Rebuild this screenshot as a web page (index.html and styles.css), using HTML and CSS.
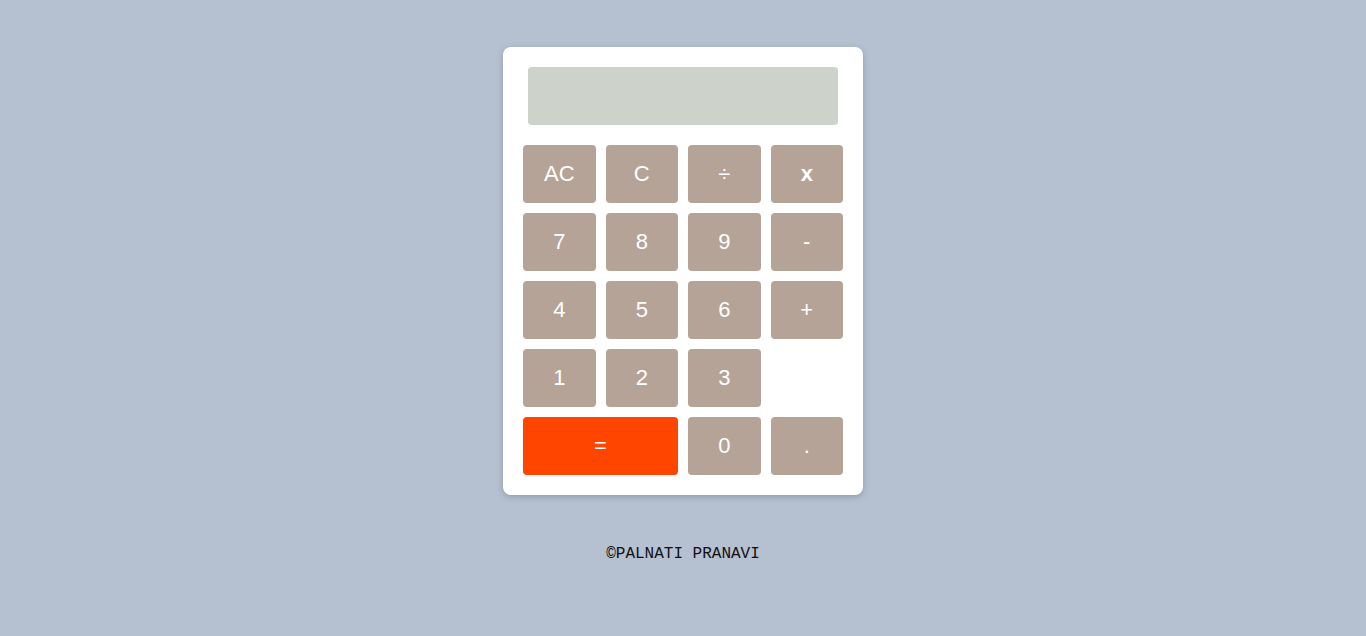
FILE: index.html
```html
<!DOCTYPE html>
<html>
<head>
<meta charset="utf-8">
<link rel="stylesheet" href="styles.css">
</head>
<body>
<div class="page">
  <div class="calc">
    <div class="display"></div>
    <div class="keys">
      <button class="key">AC</button>
      <button class="key">C</button>
      <button class="key">÷</button>
      <button class="key bold">x</button>
      <button class="key">7</button>
      <button class="key">8</button>
      <button class="key">9</button>
      <button class="key">-</button>
      <button class="key">4</button>
      <button class="key">5</button>
      <button class="key">6</button>
      <button class="key">+</button>
      <button class="key">1</button>
      <button class="key">2</button>
      <button class="key">3</button>
      <div class="blank"></div>
      <button class="key equals">=</button>
      <button class="key">0</button>
      <button class="key">.</button>
    </div>
  </div>
  <footer class="footer">©PALNATI PRANAVI</footer>
</div>
</body>
</html>
```

FILE: styles.css
```css
html, body {
  margin: 0;
  padding: 0;
  background: #b5c0d0;
  height: 100%;
}
.page {
  display: flex;
  flex-direction: column;
  align-items: center;
  padding-top: 47px;
}
.calc {
  width: 360px;
  box-sizing: border-box;
  background: #ffffff;
  border-radius: 8px;
  padding: 20px;
  box-shadow: 0 2px 6px rgba(80, 90, 110, 0.35);
}
.display {
  height: 58px;
  margin: 0 5px 20px;
  background: #cdd3cb;
  border-radius: 4px;
}
.keys {
  display: grid;
  grid-template-columns: repeat(4, 1fr);
  grid-auto-rows: 58px;
  gap: 10px;
}
.key {
  border: none;
  border-radius: 4px;
  background: #b5a398;
  color: #ffffff;
  font-family: "Liberation Sans", Arial, sans-serif;
  font-size: 22px;
  padding: 0;
  cursor: pointer;
}
.bold {
  font-weight: bold;
}
.equals {
  grid-column: span 2;
  background: #ff4500;
}
.footer {
  margin-top: 50px;
  font-family: "Liberation Mono", "Courier New", monospace;
  font-size: 16px;
  line-height: 18px;
  color: #111;
  font-weight: 300;
}
```
